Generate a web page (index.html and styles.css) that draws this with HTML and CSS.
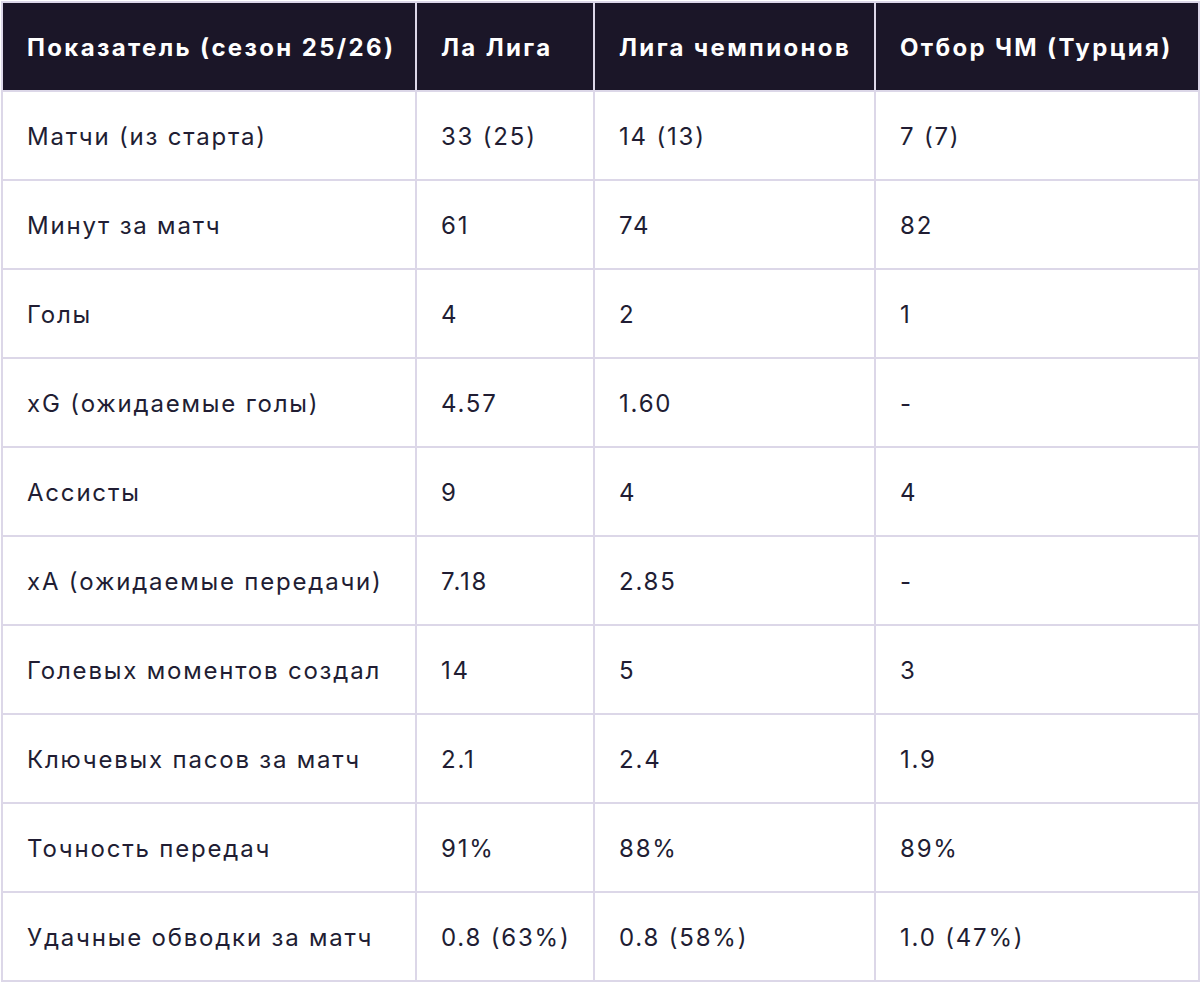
FILE: index.html
```html
<!DOCTYPE html>
<html lang="ru">
<head>
<meta charset="utf-8">
<link rel="stylesheet" href="styles.css">
</head>
<body>
<table class="stats">
  <colgroup>
    <col class="c1"><col class="c2"><col class="c3"><col class="c4">
  </colgroup>
  <thead>
    <tr><th>Показатель (сезон 25/26)</th><th>Ла Лига</th><th>Лига чемпионов</th><th>Отбор ЧМ (Турция)</th></tr>
  </thead>
  <tbody>
    <tr><td>Матчи (из старта)</td><td>33 (25)</td><td>14 (13)</td><td>7 (7)</td></tr>
    <tr><td>Минут за матч</td><td>61</td><td>74</td><td>82</td></tr>
    <tr><td>Голы</td><td>4</td><td>2</td><td>1</td></tr>
    <tr><td>xG (ожидаемые голы)</td><td>4.57</td><td>1.60</td><td>-</td></tr>
    <tr><td>Ассисты</td><td>9</td><td>4</td><td>4</td></tr>
    <tr><td>xA (ожидаемые передачи)</td><td>7.18</td><td>2.85</td><td>-</td></tr>
    <tr><td>Голевых моментов создал</td><td>14</td><td>5</td><td>3</td></tr>
    <tr><td>Ключевых пасов за матч</td><td>2.1</td><td>2.4</td><td>1.9</td></tr>
    <tr><td>Точность передач</td><td>91%</td><td>88%</td><td>89%</td></tr>
    <tr><td>Удачные обводки за матч</td><td>0.8 (63%)</td><td>0.8 (58%)</td><td>1.0 (47%)</td></tr>
  </tbody>
</table>
</body>
</html>
```
FILE: styles.css
```css
html, body {
  margin: 0;
  padding: 0;
  background: #ffffff;
}
body {
  padding: 1px 0 0 1px;
  font-family: Inter, "Noto Sans", sans-serif;
  color: #211d33;
}
.stats {
  border-collapse: collapse;
  table-layout: fixed;
  width: 1197px;
  border: 2px solid #dcd7e8;
}
.c1 { width: 414px; }
.c2 { width: 178px; }
.c3 { width: 281px; }
.c4 { width: 324px; }
.stats th,
.stats td {
  border: 2px solid #dcd7e8;
  padding: 26px 24px 24px;
  line-height: 37px;
  font-size: 24px;
  text-align: left;
  white-space: nowrap;
}
.stats th {
  background: #1b1628;
  color: #ffffff;
  font-weight: 700;
  letter-spacing: 2.35px;
}
.stats td {
  font-weight: 400;
  letter-spacing: 1.8px;
}
```
